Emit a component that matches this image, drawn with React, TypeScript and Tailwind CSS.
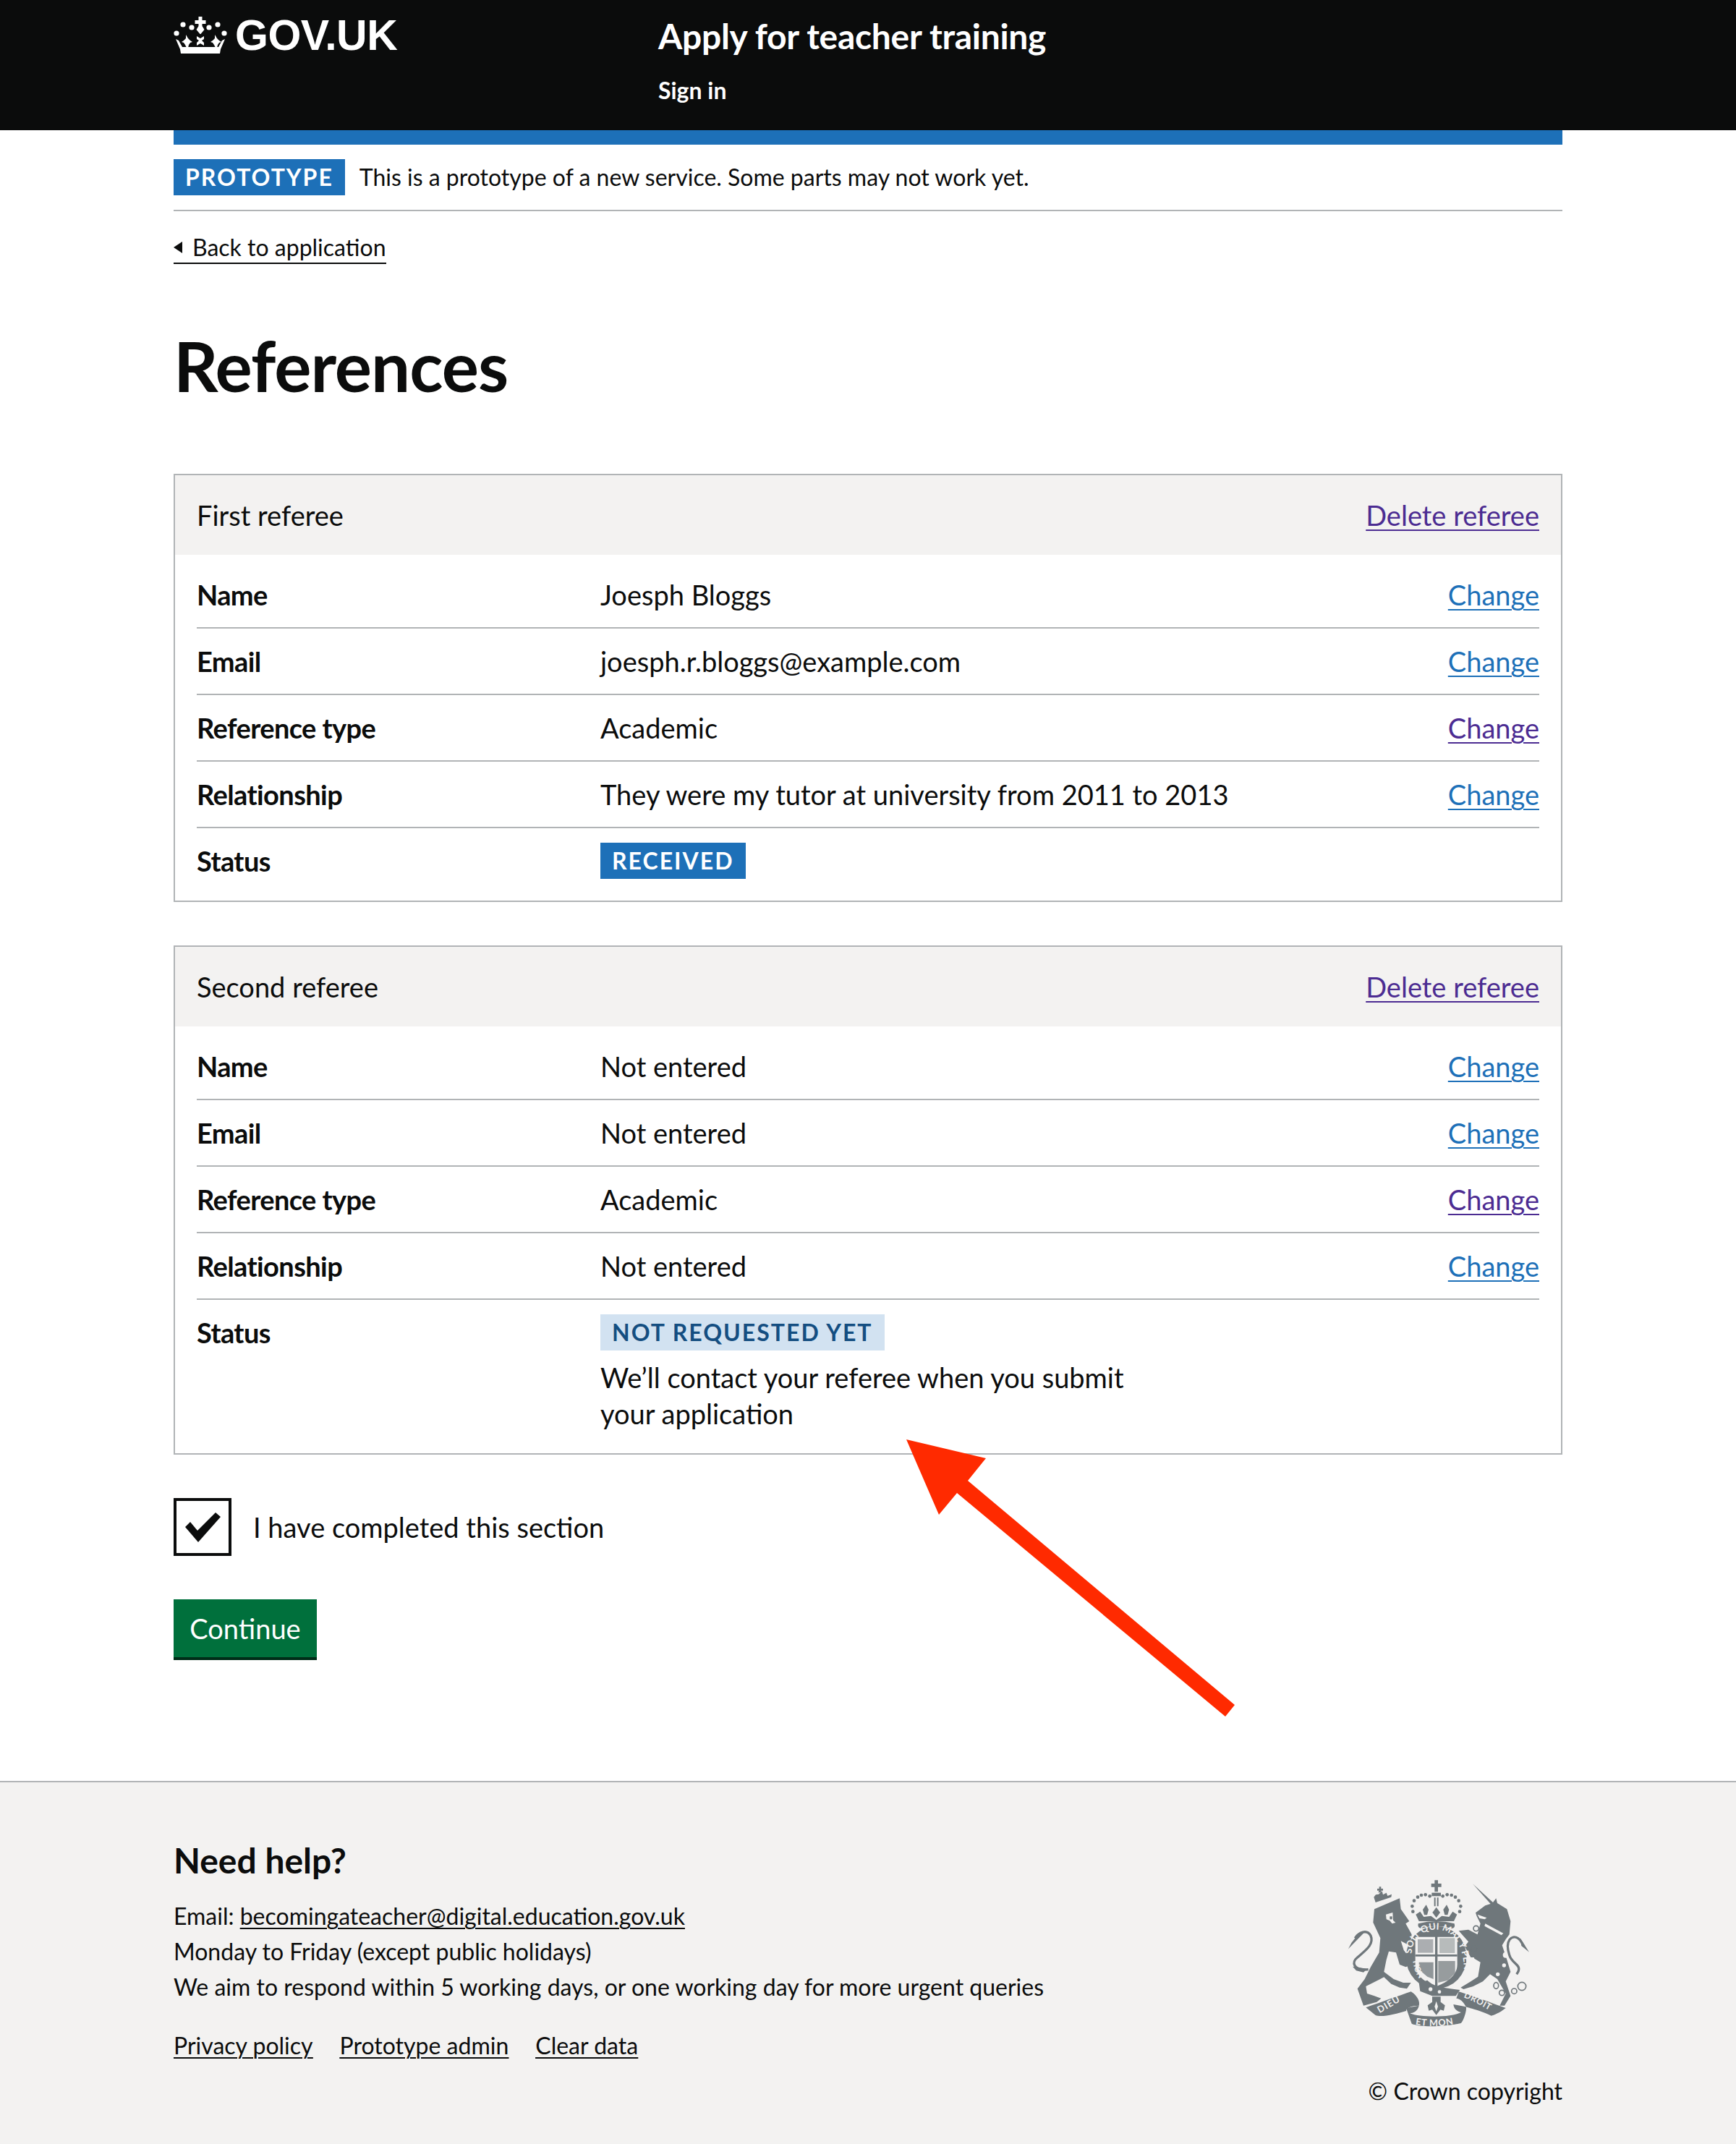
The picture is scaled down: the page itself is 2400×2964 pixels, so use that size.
import React from "react";

const font = { fontFamily: "Lato, 'Noto Sans', sans-serif" };

function CrownLogo() {
  return (
    <svg width="74" height="54" viewBox="0 0 74 54" fill="#fff" aria-hidden="true">
      <circle cx="4" cy="25" r="3.6" />
      <circle cx="13" cy="13" r="3.6" />
      <circle cx="25" cy="17" r="3.6" />
      <circle cx="49" cy="17" r="3.6" />
      <circle cx="61" cy="13" r="3.6" />
      <circle cx="70" cy="25" r="3.6" />
      <path d="M34.5 2h5v5h5v5h-5v3l3 5-5 6h-1l-5-6 3-5v-3h-5V7h5z" />
      <path d="M32 29l5 3 5-3v4l-3 2 3 3v4l-5-3-5 3v-4l3-3-3-2z" />
      <path d="M17 27l3 5 3 3 3 2-3 1-2 3-1 4h-2l-2-4-2-3-3-1 3-2 3-3z" />
      <path d="M57 27l3 5 3 3 3 2-3 1-2 3-1 4h-2l-2-4-2-3-3-1 3-2 3-3z" />
      <path d="M3 33l4 2 5 9h50l5-9 4-2-6 14-1 6H10l-1-6z" />
    </svg>
  );
}

function Crest() {
  const c = "#6f777b";
  const bg = "#f3f2f1";
  return (
    <svg width="340" height="260" viewBox="0 110 1020 780" aria-hidden="true" className="block">
      <defs>
        <path id="garterTop" d="M395 425 C395 360 445 325 497 325 C560 325 610 380 612 490 C610 510 590 540 575 555" />
        <path id="garterLeft" d="M400 455 C405 490 415 520 440 545" />
        <path id="dieu" d="M262 672 C300 650 340 625 372 610" />
        <path id="etmon" d="M410 718 C465 728 530 728 585 712" />
        <path id="droit" d="M610 605 C650 620 700 650 740 672" />
      </defs>
      {/* crown on lion */}
      <g fill={c}>
        <path d="M245 212 L310 190 L312 178 L295 185 L290 172 L276 180 L272 165 L258 178 L246 180 L238 190 Z" />
        <path d="M258 165h12v-8h8v-8h-8v-8h-8v8h-8v8h8z" transform="translate(-2 6)" />
      </g>
      {/* lion */}
      <path fill={c} d="M240 240 L345 195 L350 240 L385 290 L370 300 L395 345 L388 392 L350 372 L362 410 L385 440 L398 470 L370 480 L345 470 L330 420 L300 415 L290 450 L280 500 L320 530 L360 545 L392 545 L375 570 L345 565 L310 550 L280 522 L260 532 L205 560 L210 590 L240 600 L268 610 L250 625 L195 640 L170 570 L200 530 L225 480 L260 420 L265 360 L235 295 Z" />
      <path fill={bg} d="M288 262 l28 -8 l2 32 l10 10 l-14 4 l-10 -12 l-14 -6z" />
      <path fill={c} d="M304 270 l10 0 l0 12 l-10 0z" />
      <path fill="none" stroke={c} strokeWidth="10" d="M215 490 C150 495 145 460 170 440 C205 410 240 385 225 350 C210 322 175 335 160 360" />
      <path fill={c} d="M200 335 L132 405 L145 380 L175 340 Z" />
      <path fill={c} d="M150 478 L210 488 L195 502 L165 495 Z" />
      {/* unicorn */}
      <path fill={c} d="M648 135 L732 212 L745 195 L750 215 L790 240 L805 290 L800 345 L785 365 L770 390 L790 450 L805 500 L785 540 L805 600 L780 640 L760 640 L785 590 L750 530 L720 510 L690 540 L650 560 L610 572 L598 565 L640 540 L670 520 L680 460 L655 445 L640 400 L664 440 L640 440 L615 395 L630 375 L590 330 L630 325 L668 345 L680 300 L665 270 L660 255 L700 225 L722 218 Z" />
      <path fill={bg} d="M700 300 l75 40 l-8 8 l-70 -38z" />
      <path fill={bg} d="M668 262 l38 14 l-8 6 l-22 -4z" />
      <g fill={bg}>
        <circle cx="785" cy="430" r="12" />
        <circle cx="778" cy="473" r="8" />
        <circle cx="752" cy="510" r="8" />
      </g>
      <g fill="none" stroke={c} strokeWidth="5">
        <circle cx="662" cy="320" r="11" />
        <circle cx="652" cy="405" r="12" />
        <ellipse cx="745" cy="557" rx="10" ry="13" />
        <circle cx="769" cy="587" r="11" />
        <circle cx="820" cy="580" r="11" />
        <circle cx="852" cy="560" r="17" />
      </g>
      <path fill="none" stroke={c} strokeWidth="10" d="M800 430 C780 370 810 345 835 360 C855 372 850 385 862 395 M800 430 C810 470 860 470 830 510" />
      <path fill={c} d="M845 360 L882 418 L850 392 Z" />
      {/* royal crown */}
      <g fill={c}>
        <path d="M490 120h14v14h14v14h-14v20h-14v-20h-14v-14h14z" />
        <path d="M478 172h38v14h-38z" />
        <path d="M488 192h6v36h-6zM500 192h6v36h-6z" />
      </g>
      <g fill={c}>
        {[[405,205],[397,228],[400,250],[420,190],[435,182],[452,180],[470,186],[524,186],[542,180],[560,182],[576,190],[590,205],[598,228],[594,250]].map(([x, y], i) => (
          <circle key={i} cx={x} cy={y} r="7" />
        ))}
        <path d="M455 222 l10 20 l-6 22 l-12 0 l-6 -22z" />
        <path d="M540 222 l10 20 l-6 22 l-12 0 l-6 -22z" />
        <path d="M497 232 l16 22 l-16 22 l-16 -22z" />
        <path d="M412 262 L430 250 L445 272 L475 268 L497 285 L520 268 L550 272 L565 250 L583 262 L570 290 L425 290 Z" />
        <path d="M422 300 Q497 280 572 300 Q578 320 560 320 Q497 300 435 320 Q418 318 422 300 Z" />
      </g>
      {/* garter */}
      <ellipse cx="497" cy="440" rx="126" ry="130" fill={c} />
      <path fill={bg} d="M410 355 H584 V470 C584 520 530 548 497 560 C460 548 410 520 410 470 Z" />
      <path fill={c} d="M492 350 h10 v212 h-10z M410 428 h174 v8 h-174z" />
      <g fill={c}>
        <path d="M420 365 h64 v56 h-64z" opacity="0.55" />
        <path d="M510 360 h64 v62 h-64z" opacity="0.45" />
        <path d="M425 460 h60 v70 l-25 -10 l-35 -30z" opacity="0.75" />
        <path d="M505 455 h70 v50 l-30 30 l-40 10z" opacity="0.7" />
      </g>
      <text fontFamily="Lato, sans-serif" fontSize="38" fontWeight="700" fill={bg} letterSpacing="1">
        <textPath href="#garterTop">SOIT QUI MAL Y PENSE</textPath>
      </text>
      <text fontFamily="Lato, sans-serif" fontSize="34" fontWeight="700" fill={bg}>
        <textPath href="#garterLeft">HON</textPath>
      </text>
      <path fill={c} d="M425 545 L460 535 C490 565 530 565 595 575 L578 600 L480 600 L430 580 Z" />
      <circle cx="473" cy="572" r="8" fill={bg} />
      <circle cx="510" cy="583" r="7" fill={bg} />
      {/* motto */}
      <path fill={c} d="M205 648 C270 625 340 600 392 582 C420 600 430 625 425 640 C395 640 370 650 372 662 C330 675 270 690 245 680 Z" />
      <path fill={c} d="M372 650 L425 640 C420 665 400 670 388 672 C430 690 560 690 600 668 C585 665 570 655 568 635 L620 645 C625 655 612 700 600 712 C570 722 440 735 395 715 Z" />
      <path fill={c} d="M590 582 C650 600 730 630 785 650 C760 670 735 680 725 682 C680 660 630 650 620 645 C610 625 595 610 580 610 Z" />
      <text fontFamily="Lato, sans-serif" fontSize="38" fontWeight="700" fill={bg} letterSpacing="3">
        <textPath href="#dieu">DIEU</textPath>
      </text>
      <text fontFamily="Lato, sans-serif" fontSize="38" fontWeight="700" fill={bg} letterSpacing="2">
        <textPath href="#etmon">ET MON</textPath>
      </text>
      <text fontFamily="Lato, sans-serif" fontSize="36" fontWeight="700" fill={bg} letterSpacing="2">
        <textPath href="#droit">DROIT</textPath>
      </text>
      {/* fleur */}
      <path fill={c} d="M480 603 h35 v22 l18 14 l-5 22 l-14 -4 l-17 22 l-17 -22 l-14 4 l-5 -22 l19 -14z" />
      <path fill={bg} d="M497 622 l7 22 l-7 20 l-7 -20z" />
    </svg>
  );
}

type Row = { k: string; v: string; visited?: boolean };

function RowItem({ r, first }: { r: Row; first?: boolean }) {
  return (
    <div className={`flex border-b-2 border-[#b1b4b6] pb-[20px] ${first ? "pt-[30px]" : "pt-[20px]"}`}>
      <div className="w-[558px] shrink-0 text-[38px] leading-[50px] font-bold tracking-[-0.6px]">{r.k}</div>
      <div className="grow text-[38px] leading-[50px]">{r.v}</div>
      <a className={`text-[38px] leading-[50px] underline underline-offset-[5px] decoration-2 ${r.visited ? "text-[#4c2c92]" : "text-[#1d70b8]"}`}>Change</a>
    </div>
  );
}

function Card({ title, rows, children, className }: { title: string; rows: Row[]; children: React.ReactNode; className?: string }) {
  return (
    <section className={`border-2 border-[#b1b4b6] ${className ?? ""}`}>
      <div className="flex justify-between bg-[#f3f2f1] px-[30px] py-[30px] text-[38px] leading-[50px]">
        <span>{title}</span>
        <a className="text-[#4c2c92] underline underline-offset-[5px] decoration-2">Delete referee</a>
      </div>
      <div className="px-[30px]">
        {rows.map((r, i) => (
          <RowItem key={r.k} r={r} first={i === 0} />
        ))}
        <div className="flex pt-[20px] pb-[30px]">
          <div className="w-[558px] shrink-0 text-[38px] leading-[50px] font-bold tracking-[-0.6px]">Status</div>
          <div className="grow">{children}</div>
        </div>
      </div>
    </section>
  );
}

export default function App() {
  return (
    <div className="relative bg-white text-[#0b0c0c] w-[2400px] h-[2964px] flex flex-col overflow-hidden" style={font}>
      <header className="h-[180px] bg-[#0b0c0c] text-white shrink-0 pl-[240px] flex">
        <div className="w-[670px] flex items-start pt-[21px] gap-[11px]">
          <CrownLogo />
          <span className="text-[59px] leading-[56px] font-bold tracking-[-0.5px]" style={{ fontFamily: "'Liberation Sans', sans-serif" }}>GOV.UK</span>
        </div>
        <div className="pt-[22px]">
          <div className="text-[48px] leading-[56px] font-bold tracking-[-0.3px]">Apply for teacher training</div>
          <div className="mt-[22px] text-[32px] leading-[50px] font-bold">Sign in</div>
        </div>
      </header>

      <main className="mx-[240px] w-[1920px] grow">
        <div className="h-[20px] bg-[#1d70b8]" />
        <div className="flex items-center gap-[20px] pt-[20px] pb-[20px] border-b-2 border-[#b1b4b6]">
          <span className="bg-[#1d70b8] text-white font-bold text-[32px] leading-[50px] tracking-[2px] px-[16px]">PROTOTYPE</span>
          <span className="text-[32px] leading-[50px]">This is a prototype of a new service. Some parts may not work yet.</span>
        </div>
        <a className="mt-[30px] inline-flex items-center gap-[14px] border-b-2 border-[#0b0c0c] text-[32px] leading-[40px] pb-[1px]">
          <span className="w-0 h-0 border-y-[8px] border-y-transparent border-r-[12px] border-r-[#0b0c0c]" />
          Back to application
        </a>
        <h1 className="mt-[90px] text-[96px] leading-[100px] font-bold tracking-[-1px]">References</h1>

        <Card
          className="mt-[100px]"
          title="First referee"
          rows={[
            { k: "Name", v: "Joesph Bloggs" },
            { k: "Email", v: "joesph.r.bloggs@example.com" },
            { k: "Reference type", v: "Academic", visited: true },
            { k: "Relationship", v: "They were my tutor at university from 2011 to 2013" },
          ]}
        >
          <span className="inline-block bg-[#1d70b8] text-white font-bold text-[32px] leading-[50px] tracking-[2px] px-[16px]">RECEIVED</span>
        </Card>

        <Card
          className="mt-[60px]"
          title="Second referee"
          rows={[
            { k: "Name", v: "Not entered" },
            { k: "Email", v: "Not entered" },
            { k: "Reference type", v: "Academic", visited: true },
            { k: "Relationship", v: "Not entered" },
          ]}
        >
          <span className="inline-block bg-[#d2e2f1] text-[#144e81] font-bold text-[32px] leading-[50px] tracking-[2px] px-[16px]">NOT REQUESTED YET</span>
          <p className="mt-[12px] max-w-[800px] text-[38px] leading-[50px]">We’ll contact your referee when you submit your application</p>
        </Card>

        <div className="mt-[60px] flex items-center gap-[30px]">
          <span className="w-[80px] h-[80px] border-[4px] border-[#0b0c0c] flex items-center justify-center">
            <svg width="54" height="44" viewBox="0 0 54 44" fill="#0b0c0c"><path d="M3 22 L10 15 L20 27 L45 2 L52 8 L21 43 Z" /></svg>
          </span>
          <span className="text-[38px] leading-[50px]">I have completed this section</span>
        </div>

        <button className="mt-[60px] block h-[80px] w-[198px] bg-[#00703c] text-white text-[38px] leading-[50px] shadow-[0_4px_0_#002d18] border-b-0">Continue</button>
      </main>

      <footer className="shrink-0 h-[502px] bg-[#f3f2f1] border-t-2 border-[#b1b4b6] px-[240px] flex justify-between">
        <div>
          <h2 className="mt-[78px] text-[48px] leading-[60px] font-bold">Need help?</h2>
          <div className="mt-[22px] text-[32px] leading-[49px]">
            <p>Email: <a className="underline underline-offset-[4px] decoration-2">becomingateacher@digital.education.gov.uk</a></p>
            <p>Monday to Friday (except public holidays)</p>
            <p>We aim to respond within 5 working days, or one working day for more urgent queries</p>
          </div>
          <div className="mt-[32px] flex gap-[37px] text-[32px] leading-[50px] underline underline-offset-[4px] decoration-2">
            <a>Privacy policy</a>
            <a>Prototype admin</a>
            <a>Clear data</a>
          </div>
        </div>
        <div className="flex flex-col items-end pt-[132px]">
          <Crest />
          <div className="mt-[10px] text-[32px] leading-[50px]">© Crown copyright</div>
        </div>
      </footer>

      {/* annotation arrow */}
      <svg className="absolute left-0 top-0 pointer-events-none" width="2400" height="2964" viewBox="0 0 2400 2964" aria-hidden="true">
        <path fill="#ff2a00" d="M1253 1990 L1363 2016 L1338 2047 L1707 2357 L1694 2373 L1323 2064 L1298 2094 Z" />
      </svg>
    </div>
  );
}
